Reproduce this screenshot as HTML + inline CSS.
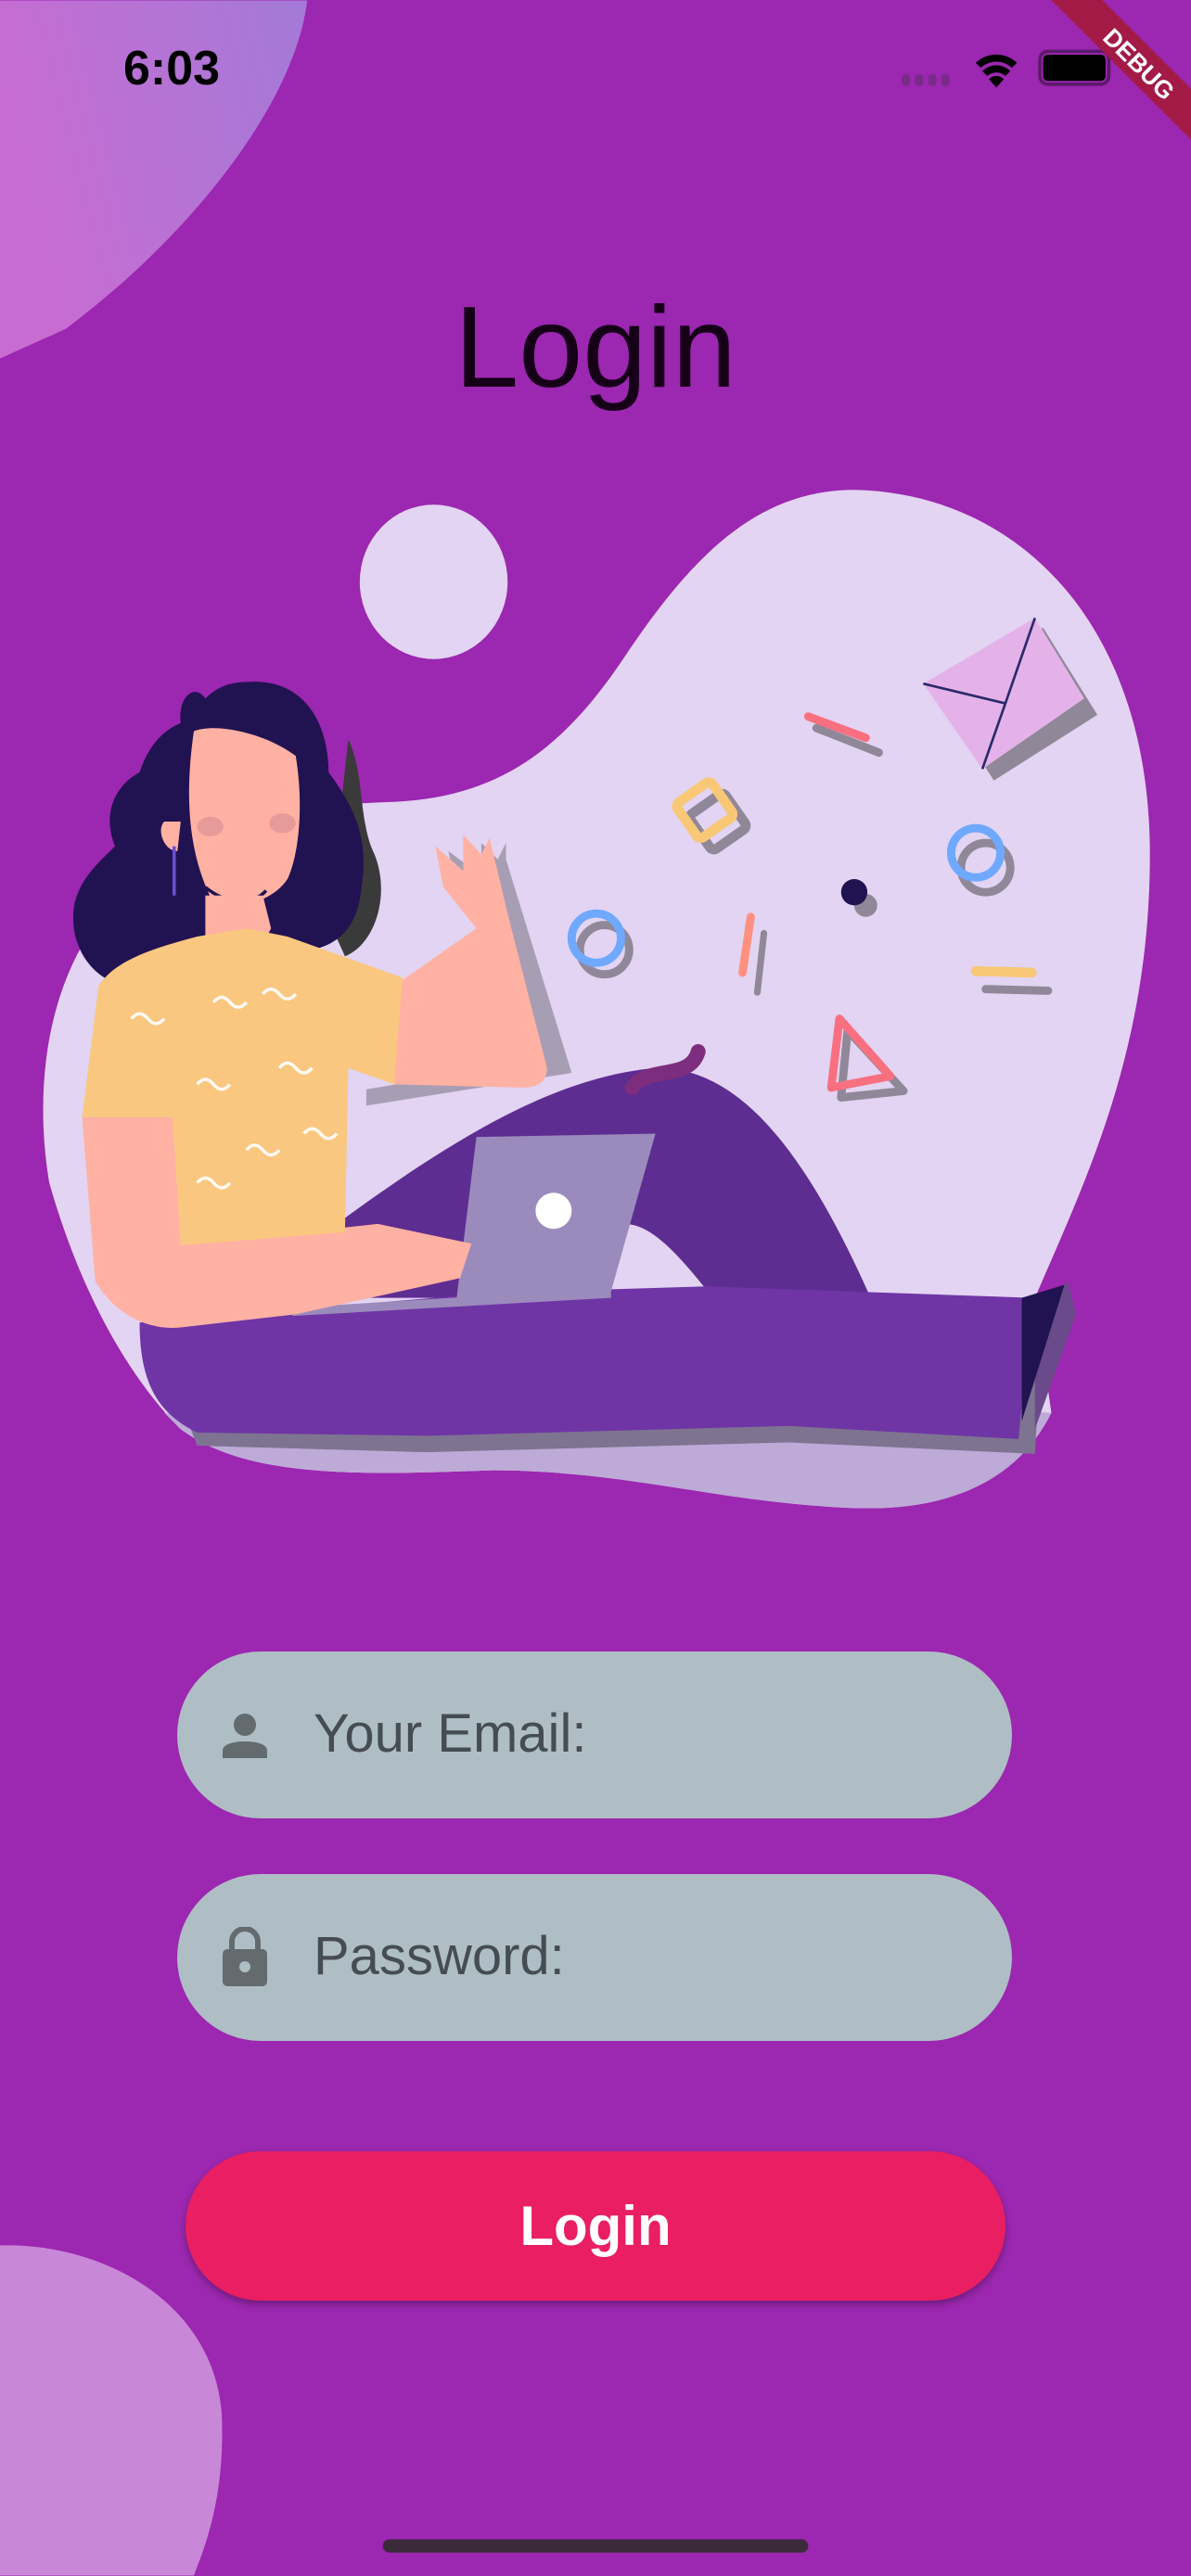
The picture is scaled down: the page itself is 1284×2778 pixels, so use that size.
<!DOCTYPE html>
<html><head><meta charset="utf-8"><style>
html,body{margin:0;padding:0}
body{width:1284px;height:2778px;background:#9c27b0;position:relative;overflow:hidden;font-family:"Liberation Sans",sans-serif}
svg.bg{position:absolute;left:0;top:0}
.t{position:absolute;white-space:nowrap}
.field{position:absolute;left:191px;width:900px;height:180px;border-radius:90px;background:#afbec5}
.field span{position:absolute;left:147px;top:50%;transform:translateY(-52%);font-size:58px;color:#464d52}
.btn{position:absolute;left:200px;top:2320px;width:884px;height:161px;border-radius:81px;background:#e91e63;box-shadow:0 4px 8px rgba(0,0,0,.3);color:#fff;font-weight:bold;font-size:60px;text-align:center;line-height:161px}
</style></head><body>
<svg class="bg" width="1284" height="2778" viewBox="0 0 725 1568">
<defs><linearGradient id="g1" x1="0" y1="0.3" x2="1" y2="0"><stop offset="0" stop-color="#c86cd2"/><stop offset="1" stop-color="#a37ad7"/></linearGradient></defs>
<path d="M0 0H187C180 60 120 140 40 200L0 218Z" fill="url(#g1)"/>
<path d="M0 1367C60 1365 130 1400 135 1470C137 1520 125 1550 118 1568H0Z" fill="#c987d8"/>
<path d="M240 488C300 485 340 460 380 400C420 340 460 298 520 298C620 300 700 380 700 520C700 640 660 720 630 790L640 860C620 900 580 920 520 918C440 915 380 895 300 895C220 898 150 900 110 870C80 840 50 790 30 720C20 660 30 600 60 560C90 520 150 490 240 488Z" fill="#e2d4f2"/>
<path d="M100 860C200 870 400 850 640 860C620 900 580 920 520 918C440 915 380 895 300 895C220 898 150 900 110 870Z" fill="#bdaad7"/>
<ellipse cx="264" cy="354" rx="45" ry="47" fill="#e2d4f2"/>
<path d="M95 815L300 795L635 797L630 885L480 878L260 884L120 880Z" fill="#7e7390"/>
<path d="M630 800L650 780L655 800L630 870Z" fill="#6a4a8a"/>
<path d="M205 745C280 690 340 655 400 650C450 650 490 700 530 790L430 785C410 760 395 745 380 745L350 790L210 790Z" fill="#5e2d91"/>
<path d="M85 805L300 787L430 783L628 790L620 876L480 868L260 874L120 872C95 860 85 840 85 805Z" fill="#6f35a5"/>
<path d="M622 790L648 782L622 865Z" fill="#211251"/>
<path d="M290 692L399 690L372 786L278 790Z" fill="#9b8bbd"/>
<path d="M178 796L372 784L372 790L178 801Z" fill="#9b8bbd"/>
<circle cx="337" cy="737" r="11" fill="#fff"/>
<!-- hair -->
<path d="M212 450C222 470 218 500 228 520C238 545 228 575 210 582L200 560Z" fill="#3a3a3a"/>
<path d="M150 415C185 412 200 440 200 470C215 490 225 510 220 540C218 565 205 575 190 578L170 575L150 585L120 580C105 588 90 595 75 600C55 595 42 575 45 552C48 535 60 525 70 515C62 495 70 478 85 470C90 455 98 445 110 440C108 425 118 415 125 425C132 418 140 415 150 415Z" fill="#211251"/>
<path d="M118 445C130 440 160 445 180 460C185 490 182 520 175 535C165 550 140 555 130 550C120 530 110 500 118 445Z" fill="#ffb1a3"/>
<path d="M100 500C95 505 100 518 108 518L110 500Z" fill="#ffb1a3"/>
<path d="M106 515L106 545" stroke="#6a50d0" stroke-width="2"/>
<ellipse cx="128" cy="503" rx="8" ry="6" fill="#e69a9a"/>
<ellipse cx="172" cy="501" rx="8" ry="6" fill="#e69a9a"/>
<path d="M125 540C140 552 155 550 162 542" stroke="#211251" stroke-width="2" fill="none"/>
<path d="M125 545L125 570L155 585L165 565L160 545Z" fill="#ffb1a3"/>
<path d="M50 680L58 780C70 800 90 810 110 808L180 800L280 778L287 757L230 745L110 758L105 680Z" fill="#ffb1a3"/>
<path d="M300 520L340 650L215 670L215 660L245 655L240 600L290 565L270 540L265 515L285 530L285 510L295 520L300 510Z" fill="#908898" opacity=".7" transform="translate(8,3)"/>
<path d="M240 600L290 565L270 540L265 515L282 530L282 508L293 520L298 510L310 560L333 650C333 660 325 662 318 662L240 660Z" fill="#ffb1a3"/>
<path d="M50 680L60 600C70 585 90 578 120 570L150 565L175 570L245 595L240 660L212 650L210 750L110 758L105 680Z" fill="#f9c77f"/>
<g stroke="#fff" stroke-width="2" fill="none" opacity=".9">
<path d="M130 610q5-6 10 0t10 0"/><path d="M160 605q5-6 10 0t10 0"/><path d="M80 620q5-6 10 0t10 0"/><path d="M120 660q5-6 10 0t10 0"/><path d="M170 650q5-6 10 0t10 0"/><path d="M150 700q5-6 10 0t10 0"/><path d="M185 690q5-6 10 0t10 0"/><path d="M120 720q5-6 10 0t10 0"/>
</g>
<path d="M570 420L635 382L668 435L605 475Z" fill="#908898"/>
<path d="M562 416L630 376L660 425L598 468Z" fill="#e4b2e8"/>
<path d="M562 416L612 428L630 376M612 428L598 468" stroke="#2a2a6a" stroke-width="1.5" fill="none"/>
<path d="M497 443L535 458" stroke="#908898" stroke-width="5" stroke-linecap="round"/>
<path d="M492 436L527 449" stroke="#f87080" stroke-width="5" stroke-linecap="round"/>
<rect x="424" y="487" width="26" height="26" rx="3" transform="rotate(-35 437 500)" stroke="#908898" stroke-width="6" fill="none"/>
<rect x="416" y="480" width="26" height="26" rx="3" transform="rotate(-35 429 493)" stroke="#f8c877" stroke-width="6" fill="none"/>
<circle cx="368" cy="578" r="15" stroke="#908898" stroke-width="5" fill="none"/>
<circle cx="363" cy="571" r="15" stroke="#6fa8ff" stroke-width="5" fill="none"/>
<circle cx="600" cy="528" r="15" stroke="#908898" stroke-width="5" fill="none"/>
<circle cx="594" cy="519" r="15" stroke="#6fa8ff" stroke-width="5" fill="none"/>
<circle cx="527" cy="551" r="7" fill="#908898"/>
<circle cx="520" cy="543" r="8" fill="#211251"/>
<path d="M465 568L461 604" stroke="#908898" stroke-width="4" stroke-linecap="round"/>
<path d="M457 558L452 592" stroke="#ff9080" stroke-width="5" stroke-linecap="round"/>
<path d="M600 602L638 603" stroke="#908898" stroke-width="5" stroke-linecap="round"/>
<path d="M594 591L628 592" stroke="#f8c877" stroke-width="6" stroke-linecap="round"/>
<path d="M516 627L550 664L512 668Z" stroke="#908898" stroke-width="5" fill="none" stroke-linejoin="round"/>
<path d="M511 620L542 655L506 662Z" stroke="#f87080" stroke-width="5" fill="none" stroke-linejoin="round"/>
<path d="M385 662C395 648 420 658 425 640" stroke="#7d2d7d" stroke-width="9" fill="none" stroke-linecap="round"/>
<g fill="#7a2a8a"><rect x="549" y="45" width="5" height="7" rx="2"/><rect x="557" y="45" width="5" height="7" rx="2"/><rect x="565" y="45" width="5" height="7" rx="2"/><rect x="573" y="45" width="5" height="7" rx="2"/></g>
<path d="M594 38a18 18 0 0 1 25 0l-3 3a14 14 0 0 0-19 0z M598 43a12 12 0 0 1 17 0l-3 3a8 8 0 0 0-11 0z M602 48a6 6 0 0 1 9 0l-4.5 5z" fill="#000"/>
<rect x="633" y="31" width="42" height="20" rx="5" fill="none" stroke="#5a1a6a" stroke-width="2"/>
<rect x="635" y="33" width="38" height="16" rx="3" fill="#000"/>
<g transform="translate(725,0) rotate(45)"><rect x="-60" y="38" width="130" height="22" fill="#a31a47"/><text x="5" y="55" font-family="Liberation Sans" font-weight="bold" font-size="15" fill="#fff" text-anchor="middle">DEBUG</text></g>
<rect x="233" y="1546" width="259" height="8" rx="4" fill="#3a2a3a"/>
</svg>
<div class="t" style="left:133px;top:44px;font-size:52px;font-weight:bold;color:#000">6:03</div>
<div class="t" style="left:0;width:1284px;text-align:center;top:304px;font-size:124px;color:#150018">Login</div>
<div class="field" style="top:1781px">
<svg style="position:absolute;left:49px;top:67px" width="48" height="48" viewBox="0 0 48 48"><circle cx="24" cy="12" r="12" fill="#636b6e"/><path d="M0 48V40C0 32 14 30 24 30S48 32 48 40V48Z" fill="#636b6e"/></svg>
<span>Your Email:</span></div>
<div class="field" style="top:2021px">
<svg style="position:absolute;left:49px;top:57px" width="48" height="64" viewBox="0 0 48 64"><path d="M10 26V16a14 14 0 0 1 28 0v10" stroke="#636b6e" stroke-width="6" fill="none"/><rect x="0" y="24" width="48" height="40" rx="5" fill="#636b6e"/><circle cx="24" cy="43" r="6" fill="#afbec5"/></svg>
<span>Password:</span></div>
<div class="btn">Login</div>
</body></html>
